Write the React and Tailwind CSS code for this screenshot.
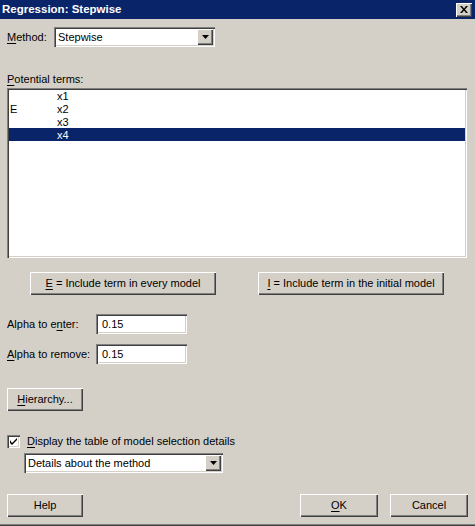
import React from "react";

const raised =
  "bg-[#d4d0c8] shadow-[inset_1px_1px_0_#ffffff,inset_-1px_-1px_0_#404040,inset_-2px_-2px_0_#808080]";
const sunken =
  "bg-white shadow-[inset_1px_1px_0_#808080,inset_2px_2px_0_#404040,inset_-1px_-1px_0_#ffffff,inset_-2px_-2px_0_#d4d0c8]";

function U({ children }) {
  return <span className="underline underline-offset-[2px]">{children}</span>;
}

function Btn({ className, children }) {
  return (
    <div
      className={`${raised} h-[23px] flex items-center justify-center text-black ${className}`}
    >
      {children}
    </div>
  );
}

function Arrow() {
  return (
    <svg width="7" height="4" viewBox="0 0 7 4">
      <path d="M0 0H7L3.5 4Z" fill="#000" />
    </svg>
  );
}

function Combo({ className, text }) {
  return (
    <div className={`${sunken} h-[20px] flex items-center pl-[4px] pr-[2px] ${className}`}>
      <span className="flex-1 leading-none">{text}</span>
      <div className={`${raised} w-[16px] h-[16px] flex items-center justify-center`}>
        <Arrow />
      </div>
    </div>
  );
}

export default function App() {
  const rows = [
    { e: "", x: "x1" },
    { e: "E", x: "x2" },
    { e: "", x: "x3" },
    { e: "", x: "x4", sel: true },
  ];
  return (
    <div
      className="w-[475px] h-[526px] bg-[#d4d0c8] flex flex-col text-[11px] text-black overflow-hidden"
      style={{ fontFamily: '"Liberation Sans", Arial, sans-serif' }}
    >
      <div className="h-[19px] bg-[#0a246a] flex items-center justify-between pl-[2px] pr-[3px] shrink-0">
        <span className="text-white font-bold text-[11.5px] leading-none">
          Regression: Stepwise
        </span>
        <div className={`${raised} w-[16px] h-[14px] flex items-center justify-center`}>
          <svg width="8" height="7" viewBox="0 0 8 7">
            <path
              d="M0 0H2L4 2.5L6 0H8L5 3.5L8 7H6L4 4.5L2 7H0L3 3.5Z"
              fill="#000"
            />
          </svg>
        </div>
      </div>

      <div className="flex flex-col pl-[7px]">
        <div className="mt-[8px] flex items-center h-[20px]">
          <span className="w-[47px]">
            <U>M</U>ethod:
          </span>
          <Combo className="w-[161px]" text="Stepwise" />
        </div>

        <div className="mt-[26px] h-[13px] leading-[13px]">
          <U>P</U>otential terms:
        </div>

        <div className={`${sunken} mt-[2px] w-[460px] h-[170px] pt-[2px] px-[2px] flex flex-col`}>
          {rows.map((r, i) => (
            <div
              key={i}
              className={`h-[13px] leading-[13px] pt-[1px] flex ${
                r.sel ? "bg-[#0a246a] text-white" : ""
              } ${i === 0 ? "mt-[-1px]" : ""}`}
            >
              <span className="w-[48px] pl-[1px]">{r.e}</span>
              <span>{r.x}</span>
            </div>
          ))}
        </div>

        <div className="mt-[14px] flex">
          <Btn className="ml-[23px] w-[186px]">
            <U>E</U>&nbsp;= Include term in every model
          </Btn>
          <Btn className="ml-[42px] w-[186px]">
            <U>I</U>&nbsp;= Include term in the initial model
          </Btn>
        </div>

        <div className="mt-[19px] flex items-center h-[20px]">
          <span className="w-[89px]">
            Alpha to e<U>n</U>ter:
          </span>
          <div className={`${sunken} w-[91px] h-[20px] flex items-center pl-[6px]`}>0.15</div>
        </div>
        <div className="mt-[10px] flex items-center h-[20px]">
          <span className="w-[89px]">
            <U>A</U>lpha to remove:
          </span>
          <div className={`${sunken} w-[91px] h-[20px] flex items-center pl-[6px]`}>0.15</div>
        </div>

        <Btn className="mt-[24px] w-[76px]">
          <U>H</U>ierarchy...
        </Btn>

        <div className="mt-[24px] flex items-center h-[13px]">
          <div className={`${sunken} w-[13px] h-[13px] flex items-center justify-center`}>
            <svg width="7" height="7" viewBox="0 0 7 7">
              <path d="M0 2V5L2 7L7 2V-0L2 5Z" fill="#000" />
            </svg>
          </div>
          <span className="ml-[7px]">
            <U>D</U>isplay the table of model selection details
          </span>
        </div>

        <Combo className="mt-[5px] ml-[17px] w-[199px]" text="Details about the method" />

        <div className="mt-[21px] flex">
          <Btn className="w-[76px]">Help</Btn>
          <Btn className="ml-[217px] w-[78px]">
            <U>O</U>K
          </Btn>
          <Btn className="ml-[12px] w-[78px]">Cancel</Btn>
        </div>
      </div>

      <div className="mt-auto h-[1px] bg-[#808080]" />
      <div className="h-[1px] bg-[#404040]" />
    </div>
  );
}
